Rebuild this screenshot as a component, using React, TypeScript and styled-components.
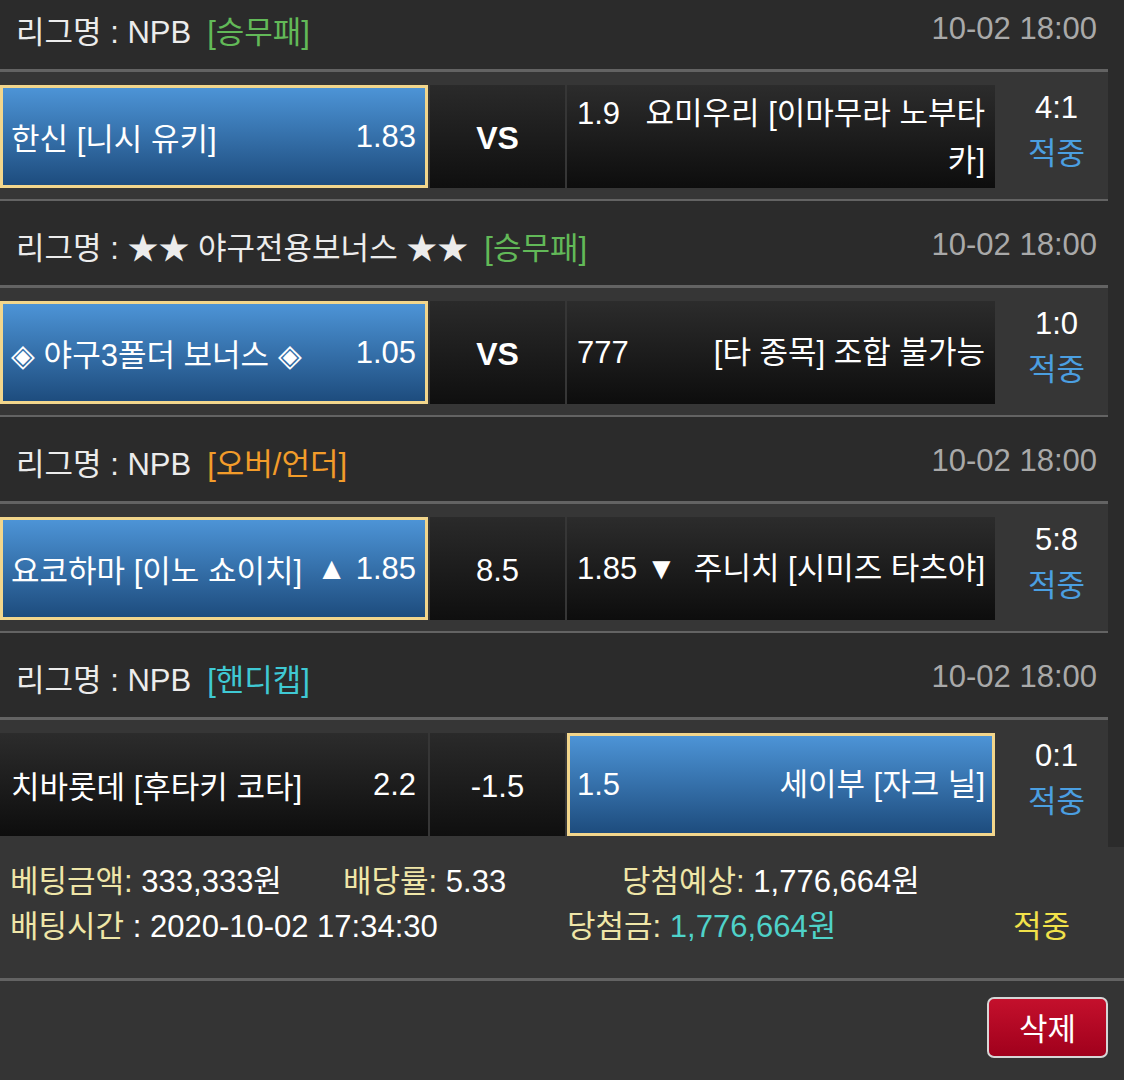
import styled, { createGlobalStyle } from "styled-components";

type Tone = "green" | "orange" | "cyan";

interface Side {
  name: string;
  odds: string;
  picked?: boolean;
}

interface Match {
  league: string;
  tag: string;
  tone: Tone;
  time: string;
  home: Side;
  mid: string;
  midBold?: boolean;
  away: Side;
  score: string;
  result: string;
}

const toneColor: Record<Tone, string> = {
  green: "#62b958",
  orange: "#f39c2a",
  cyan: "#3fc9d4",
};

const matches: Match[] = [
  {
    league: "NPB",
    tag: "[승무패]",
    tone: "green",
    time: "10-02 18:00",
    home: { name: "한신 [니시 유키]", odds: "1.83", picked: true },
    mid: "VS",
    midBold: true,
    away: { name: "요미우리 [이마무라 노부타카]", odds: "1.9" },
    score: "4:1",
    result: "적중",
  },
  {
    league: "★★ 야구전용보너스 ★★",
    tag: "[승무패]",
    tone: "green",
    time: "10-02 18:00",
    home: { name: "◈ 야구3폴더 보너스 ◈", odds: "1.05", picked: true },
    mid: "VS",
    midBold: true,
    away: { name: "[타 종목] 조합 불가능", odds: "777" },
    score: "1:0",
    result: "적중",
  },
  {
    league: "NPB",
    tag: "[오버/언더]",
    tone: "orange",
    time: "10-02 18:00",
    home: { name: "요코하마 [이노 쇼이치]", odds: "▲ 1.85", picked: true },
    mid: "8.5",
    away: { name: "주니치 [시미즈 타츠야]", odds: "1.85 ▼" },
    score: "5:8",
    result: "적중",
  },
  {
    league: "NPB",
    tag: "[핸디캡]",
    tone: "cyan",
    time: "10-02 18:00",
    home: { name: "치바롯데 [후타키 코타]", odds: "2.2" },
    mid: "-1.5",
    away: { name: "세이부 [자크 닐]", odds: "1.5", picked: true },
    score: "0:1",
    result: "적중",
  },
];

export default function App() {
  return (
    <>
      <GlobalStyle />
      <Board>
        {matches.map((m, i) => (
          <Block key={i}>
            <Header>
              <League>
                리그명 : {m.league}
                <Tag $tone={m.tone}>{m.tag}</Tag>
              </League>
              <Time>{m.time}</Time>
            </Header>
            <Row>
              <HomeCell $picked={m.home.picked}>
                <span>{m.home.name}</span>
                <span>{m.home.odds}</span>
              </HomeCell>
              <MidCell $bold={m.midBold}>{m.mid}</MidCell>
              <AwayCell $picked={m.away.picked}>
                <AwayText>
                  <AwayOdds>{m.away.odds}</AwayOdds>
                  {m.away.name}
                </AwayText>
              </AwayCell>
              <Result>
                <Score>{m.score}</Score>
                <Hit>{m.result}</Hit>
              </Result>
            </Row>
          </Block>
        ))}
      </Board>
      <Summary>
        <SummaryLine>
          <Item $w={333}>
            <Label>베팅금액:</Label> 333,333원
          </Item>
          <Item $w={279}>
            <Label>배당률:</Label> 5.33
          </Item>
          <Item>
            <Label>당첨예상:</Label> 1,776,664원
          </Item>
        </SummaryLine>
        <SummaryLine>
          <Item $w={557}>
            <Label>배팅시간</Label> : 2020-10-02 17:34:30
          </Item>
          <Item $w={446}>
            <Label>당첨금:</Label> <Won>1,776,664원</Won>
          </Item>
          <Item>
            <Status>적중</Status>
          </Item>
        </SummaryLine>
      </Summary>
      <Actions>
        <DeleteButton>삭제</DeleteButton>
      </Actions>
    </>
  );
}

const GlobalStyle = createGlobalStyle`
  html, body {
    margin: 0;
    padding: 0;
    background: #343434;
  }
  body {
    font-family: "Liberation Sans", "Noto Sans CJK KR", sans-serif;
    font-size: 31px;
    color: #fff;
    overflow: hidden;
  }
`;

const Board = styled.div`
  margin-top: -15px;
  background: #2b2b2b;
  padding-right: 16px;
`;

const Block = styled.div`
  border-bottom: 2px solid #636363;
  &:last-child {
    border-bottom: none;
  }
`;

const Header = styled.div`
  height: 80px;
  padding: 4px 11px 0 16px;
  display: flex;
  align-items: center;
  justify-content: space-between;
  border-bottom: 3px solid #636363;
`;

const League = styled.div`
  color: #ececec;
  white-space: nowrap;
`;

const Tag = styled.span<{ $tone: Tone }>`
  margin-left: 16px;
  color: ${(p) => toneColor[p.$tone]};
`;

const Time = styled.div`
  color: #a9a9a9;
`;

const Row = styled.div`
  height: 127px;
  box-sizing: border-box;
  padding: 13px 0 11px;
  background: #363636;
  display: grid;
  grid-template-columns: 428px 135px 428px 1fr;
  grid-template-rows: 103px;
  column-gap: 2px;
`;

const picked = `
  background: linear-gradient(to bottom, #4e96d9, #1c4a7b);
  background-origin: border-box;
  border-color: #f2d68c;
`;

const dark = `
  background: linear-gradient(to bottom, #2c2c2c, #0d0d0d);
  background-origin: border-box;
  border-color: transparent;
`;

const HomeCell = styled.div<{ $picked?: boolean }>`
  border: 3px solid transparent;
  box-sizing: border-box;
  padding: 0 9px 0 8px;
  display: flex;
  align-items: center;
  justify-content: space-between;
  white-space: nowrap;
  ${(p) => (p.$picked ? picked : dark)}
`;

const MidCell = styled.div<{ $bold?: boolean }>`
  display: flex;
  align-items: center;
  justify-content: center;
  background: linear-gradient(to bottom, #2a2a2a, #0f0f0f);
  font-weight: ${(p) => (p.$bold ? 700 : 400)};
  font-size: ${(p) => (p.$bold ? "32px" : "31px")};
  padding-top: 4px;
`;

const AwayCell = styled.div<{ $picked?: boolean }>`
  border: 3px solid transparent;
  box-sizing: border-box;
  padding: 0 7px;
  display: flex;
  align-items: center;
  ${(p) => (p.$picked ? picked : dark)}
`;

const AwayText = styled.div`
  width: 100%;
  text-align: right;
  line-height: 47px;
`;

const AwayOdds = styled.span`
  float: left;
  margin-right: 12px;
`;

const Result = styled.div`
  display: flex;
  flex-direction: column;
  align-items: center;
  justify-content: flex-start;
  line-height: 46px;
  padding-left: 8px;
`;

const Score = styled.div`
  color: #fff;
`;

const Hit = styled.div`
  color: #4b9fe1;
`;

const Summary = styled.div`
  padding: 12px 0 0 10px;
  background: #363636;
  border-bottom: 3px solid #636363;
  height: 119px;
`;

const SummaryLine = styled.div`
  display: flex;
  line-height: 45px;
  white-space: nowrap;
`;

const Item = styled.div<{ $w?: number }>`
  ${(p) => (p.$w ? `width: ${p.$w}px;` : "")}
  flex: none;
  color: #fff;
`;

const Label = styled.span`
  color: #efe6a8;
`;

const Won = styled.span`
  color: #4fd2c9;
`;

const Status = styled.span`
  color: #f2e24a;
`;

const Actions = styled.div`
  display: flex;
  justify-content: flex-end;
  padding: 16px 16px 0 0;
`;

const DeleteButton = styled.button`
  width: 121px;
  height: 61px;
  border: 2px solid #d6d6d6;
  border-radius: 7px;
  background: linear-gradient(to bottom, #c4102c, #a0001c);
  color: #fff;
  font-family: "Liberation Sans", "Noto Sans CJK KR", sans-serif;
  font-size: 31px;
  padding: 0 0 2px;
`;
